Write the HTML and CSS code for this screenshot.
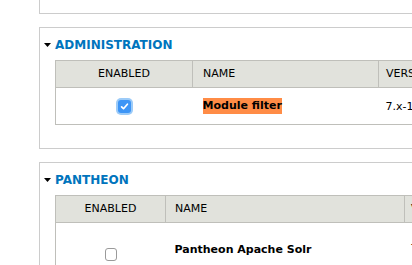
FILE: index.html
```html
<!DOCTYPE html>
<html lang="en">
<head>
  <meta charset="UTF-8" />
  <title>Modules</title>
  <link rel="stylesheet" href="styles.css">
</head>
<body>

  <div class="grupo cortado"></div>

  <div class="grupo">
    <div class="legenda">
      <svg class="seta" width="7" height="4" viewBox="0 0 7 4"><path d="M0 0H7L3.5 4Z" fill="#000"/></svg>
      Administration
    </div>
    <table class="modulos adm">
      <thead>
        <tr>
          <th class="col-enabled">Enabled</th>
          <th class="col-name">Name</th>
          <th class="col-version">Version</th>
        </tr>
      </thead>
      <tbody>
        <tr>
          <td class="col-enabled">
            <span class="caixa marcada">
              <svg width="13" height="13" viewBox="0 0 13 13"><path d="M3.6 6.8L5.5 8.7L9.4 4.2" fill="none" stroke="#fff" stroke-width="1.7" stroke-linecap="round" stroke-linejoin="round"/></svg>
            </span>
          </td>
          <td class="col-name"><span class="destaque">Module filter</span></td>
          <td class="col-version">7.x-1.0</td>
        </tr>
      </tbody>
    </table>
  </div>

  <div class="grupo">
    <div class="legenda">
      <svg class="seta" width="7" height="4" viewBox="0 0 7 4"><path d="M0 0H7L3.5 4Z" fill="#000"/></svg>
      Pantheon
    </div>
    <table class="modulos pan">
      <thead>
        <tr>
          <th class="col-enabled">Enabled</th>
          <th class="col-name">Name</th>
          <th class="col-version">Version</th>
        </tr>
      </thead>
      <tbody>
        <tr class="alta">
          <td class="col-enabled"><span class="caixa"></span></td>
          <td class="col-name"><span class="nome">Pantheon Apache Solr</span></td>
          <td class="col-version">7.x-1.0</td>
        </tr>
      </tbody>
    </table>
  </div>

</body>
</html>
```

FILE: styles.css
```css
body {
  margin: 0;
  overflow: hidden;
  background: #fff;
  font-family: 'DejaVu Sans', sans-serif;
  font-size: 11px;
  color: #000;
}

.grupo {
  width: 420px;
  margin: 0 0 13px 39px;
  padding: 9px 0 23px 15px;
  border: 1px solid #ccc;
  box-sizing: border-box;
}

.grupo.cortado {
  height: 14px;
  padding: 0;
  border-top: none;
}

.legenda {
  display: flex;
  align-items: center;
  gap: 4px;
  margin-left: -11px;
  margin-bottom: 7px;
  font-size: 12px;
  line-height: 16px;
  font-weight: bold;
  text-transform: uppercase;
  color: #0074bd;
}

.modulos {
  width: 420px;
  border-collapse: collapse;
  border: 1px solid #bfbfba;
  table-layout: fixed;
}

.modulos th {
  background: #e1e2dc;
  border: 1px solid #bfbfba;
  padding: 6px 0;
  height: 26px;
  box-sizing: border-box;
  font-weight: normal;
  line-height: 14px;
  text-transform: uppercase;
  text-align: left;
  white-space: nowrap;
}

.modulos td {
  padding: 0;
  height: 36px;
  border-bottom: 1px solid #bfbfba;
  white-space: nowrap;
}

.modulos .col-enabled {
  text-align: center;
}

.adm .col-enabled { width: 137px; }
.adm .col-name { width: 186px; padding-left: 10px; }
.adm .col-version { padding-left: 7px; }

.pan .col-enabled { width: 110px; }
.pan .col-name { width: 239px; padding-left: 9px; }
.pan .col-version { padding-left: 6px; }

.pan .alta td {
  height: 60px;
  vertical-align: top;
}

.pan .alta .col-enabled { padding-top: 24px; }
.pan .alta .col-name { padding-top: 19px; }
.pan .alta .col-version { padding-top: 19px; }

.caixa {
  display: inline-block;
  width: 12px;
  height: 13px;
  box-sizing: border-box;
  border: 1px solid #9a9a9a;
  border-radius: 3px;
  background: #fff;
  vertical-align: middle;
}

.caixa.marcada {
  width: 13px;
  height: 13px;
  border: none;
  background: #3d95f6;
  box-shadow: 0 0 0 2px #9ccbf8;
  margin-top: 1px;
}

.caixa svg {
  display: block;
}

.destaque {
  display: inline-block;
  background: #ff8c46;
  font-weight: bold;
  line-height: 16px;
}

.nome {
  font-weight: bold;
  line-height: 16px;
}
```
